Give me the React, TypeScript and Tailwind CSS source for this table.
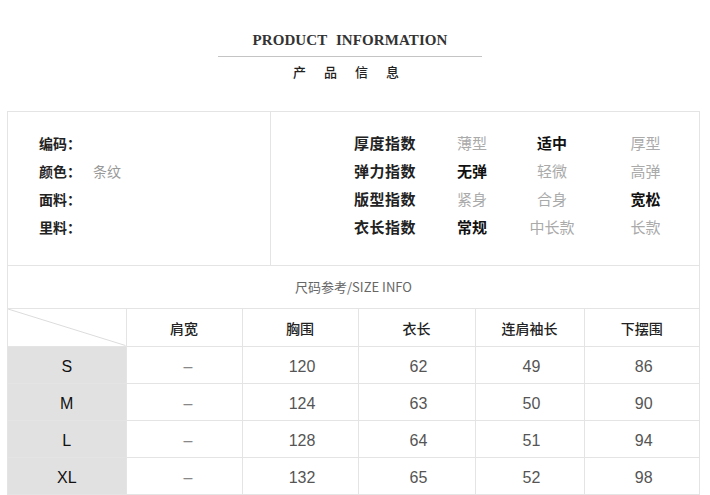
const cjk = "font-['Noto_Sans_CJK_SC','Noto_Sans',sans-serif]";

const indexRows = [
  { label: "厚度指数", values: ["薄型", "适中", "厚型"], active: 1 },
  { label: "弹力指数", values: ["无弹", "轻微", "高弹"], active: 0 },
  { label: "版型指数", values: ["紧身", "合身", "宽松"], active: 2 },
  { label: "衣长指数", values: ["常规", "中长款", "长款"], active: 0 },
];

const basics = [
  { label: "编码", value: "" },
  { label: "颜色", value: "条纹" },
  { label: "面料", value: "" },
  { label: "里料", value: "" },
];

const heads = ["肩宽", "胸围", "衣长", "连肩袖长", "下摆围"];

const sizes = [
  { size: "S", vals: ["–", "120", "62", "49", "86"] },
  { size: "M", vals: ["–", "124", "63", "50", "90"] },
  { size: "L", vals: ["–", "128", "64", "51", "94"] },
  { size: "XL", vals: ["–", "132", "65", "52", "98"] },
];

function Title() {
  return (
    <div className="flex flex-col items-center pt-[31px] pr-[10px] h-[111px]">
      <div className="font-['Liberation_Serif',serif] font-bold text-[15px] leading-[18px] tracking-[0.1px] text-[#333] [word-spacing:5px]">
        PRODUCT INFORMATION
      </div>
      <div className="w-[264px] h-px bg-[#c4c4c4] mt-[7px]" />
      <div className={`${cjk} text-[13px] leading-[18px] font-medium text-[#222] mt-[6px] tracking-[18px] pl-[10px]`}>
        产品信息
      </div>
    </div>
  );
}

function InfoSection() {
  return (
    <div className="grid grid-cols-[263px_1fr] border-b border-[#e4e4e4] h-[154px]">
      <div className={`${cjk} border-r border-[#e4e4e4] pl-[31px] pt-[17px]`}>
        {basics.map((b) => (
          <div key={b.label} className="flex h-[28px] items-center text-[14px]">
            <span className="w-[54px] text-[#222] font-bold">{b.label}：</span>
            <span className="text-[#999]">{b.value}</span>
          </div>
        ))}
      </div>
      <div className={`${cjk} pl-[83px] pt-[17px]`}>
        {indexRows.map((r) => (
          <div key={r.label} className="grid grid-cols-[78px_80px_80px_1fr] h-[28px] items-center text-[15px]">
            <span className="font-bold text-[#222] tracking-[0.5px]">{r.label}</span>
            {r.values.map((v, i) => (
              <span
                key={v}
                className={
                  i === r.active
                    ? "text-center font-bold text-[#111]"
                    : "text-center text-[#aaa]"
                }
              >
                {v}
              </span>
            ))}
          </div>
        ))}
      </div>
    </div>
  );
}

function SizeTable() {
  return (
    <table className="w-full table-fixed border-collapse">
      <colgroup>
        <col className="w-[118px]" />
        <col className="w-[116px]" />
        <col className="w-[116px]" />
        <col className="w-[117px]" />
        <col className="w-[109px]" />
        <col />
      </colgroup>
      <thead>
        <tr className="h-[37px]">
          <th className="relative border-r border-b border-[#e4e4e4] p-0">
            <svg className="absolute inset-0 w-full h-full" preserveAspectRatio="none" viewBox="0 0 100 100">
              <line x1="0" y1="0" x2="100" y2="100" stroke="#dcdcdc" strokeWidth="1" vectorEffect="non-scaling-stroke" />
            </svg>
          </th>
          {heads.map((h) => (
            <th
              key={h}
              className={`${cjk} border-r last:border-r-0 border-b border-[#e4e4e4] text-[14px] font-medium text-[#222] pt-[2px]`}
            >
              {h}
            </th>
          ))}
        </tr>
      </thead>
      <tbody>
        {sizes.map((s) => (
          <tr key={s.size} className="h-[37px]">
            <td className="bg-[#e1e1e1] border-r border-b border-[#e4e4e4] text-center font-['Liberation_Sans',sans-serif] text-[16px] text-[#111] pt-[4px]">
              {s.size}
            </td>
            {s.vals.map((v, i) => (
              <td
                key={i}
                className={
                  "border-r last:border-r-0 border-b border-[#e4e4e4] text-center font-['Liberation_Sans',sans-serif] text-[16px] pt-[4px] " +
                  (v === "–" ? "text-[#888] pl-[8px]" : "text-[#555] pl-[4px]")
                }
              >
                {v}
              </td>
            ))}
          </tr>
        ))}
        <tr className="h-[37px]">
          <td className="bg-[#e1e1e1] border-r border-[#e4e4e4]" />
          <td className="border-r border-[#e4e4e4]" />
          <td className="border-r border-[#e4e4e4]" />
          <td className="border-r border-[#e4e4e4]" />
          <td className="border-r border-[#e4e4e4]" />
          <td />
        </tr>
      </tbody>
    </table>
  );
}

export default function App() {
  return (
    <div className="w-[710px] h-[495px] overflow-hidden bg-white">
      <Title />
      <div className="ml-[7px] w-[693px] border border-[#e4e4e4]">
        <InfoSection />
        <div className={`${cjk} h-[43px] flex items-center justify-center border-b border-[#e4e4e4] text-[13px] text-[#666]`}>
          尺码参考/SIZE INFO
        </div>
        <SizeTable />
      </div>
    </div>
  );
}
